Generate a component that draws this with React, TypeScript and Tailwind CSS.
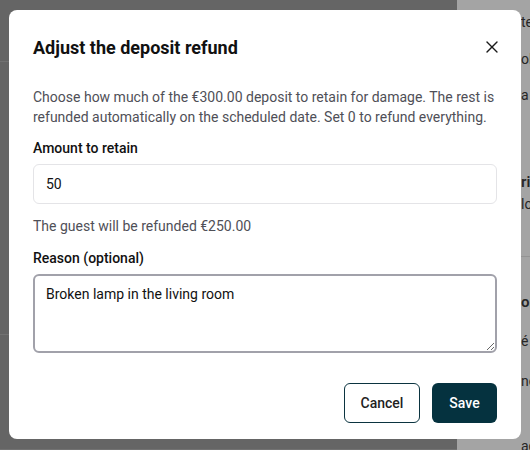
import { X } from 'lucide-react'

const LEFT_ROWS = [
  { h: 'h-[62px]', text: '' },
  { h: 'h-[273px]', text: 'Suite C' },
  { h: 'flex-1', text: '' },
]

export default function App() {
  return (
    <div className="relative w-[530px] h-[450px] overflow-hidden font-['Roboto',sans-serif]">
      {/* page behind the dimmed overlay */}
      <div className="flex h-full">
        <div className="w-[457px] bg-[#656565] flex flex-col">
          {LEFT_ROWS.map((row, i) => (
            <div key={i} className={`${row.h} border-b border-[#727272] text-[14px] text-[#2a2a2a]`} />
          ))}
        </div>
        <div className="flex-1 bg-[#a4a4a4] text-[14px] text-[#262626] pl-[64px] overflow-hidden whitespace-nowrap">
          <div className="pt-[12px] leading-[20px]">te</div>
          <div className="mt-[17px] leading-[20px]">ol</div>
          <div className="mt-[16px] leading-[20px]">a</div>
          <div className="mt-[67px] leading-[20px] font-semibold text-[15px]">ric</div>
          <div className="mt-[2px] leading-[20px]">lo</div>
          <div className="mt-[42px] border-t border-[#939393]" />
          <div className="mt-[35px] leading-[20px] font-semibold text-[15px]">or</div>
          <div className="mt-[19px] leading-[20px]">é</div>
          <div className="mt-[20px] leading-[20px]">ne</div>
          <div className="mt-[45px] leading-[20px]">adolfo</div>
        </div>
      </div>

      {/* modal */}
      <div className="absolute left-[9px] top-[10px] w-[512px] h-[429px] bg-white rounded-lg px-6 pt-6 pb-4 flex flex-col">
        <div className="flex items-start justify-between">
          <h2 className="text-[18px] leading-[28px] font-bold text-[#111111]">Adjust the deposit refund</h2>
          <button className="mt-[1px] -mr-[7px] p-[2px] text-[#1a1a1a]">
            <X size={20} strokeWidth={1.6} />
          </button>
        </div>

        <p className="mt-[25px] text-[14px] leading-[20px] text-[#4f4f57]">
          Choose how much of the €300.00 deposit to retain for damage. The rest is refunded automatically on the scheduled date. Set 0 to refund everything.
        </p>

        <label className="mt-[11px] text-[14px] leading-[20px] font-medium text-[#111111]">Amount to retain</label>
        <input
          defaultValue="50"
          className="mt-[6px] h-[40px] w-full rounded-md border border-[#e4e4e7] px-3 text-[14px] text-[#111111] outline-none"
        />
        <p className="mt-[12px] text-[14px] leading-[20px] text-[#4f4f57]">The guest will be refunded €250.00</p>

        <label className="mt-[12px] text-[14px] leading-[20px] font-medium text-[#111111]">Reason (optional)</label>
        <textarea
          defaultValue="Broken lamp in the living room"
          className="mt-[6px] h-[79px] w-full rounded-md border-2 border-[#a1a1aa] px-[11px] py-[8px] text-[14px] leading-[20px] text-[#111111] outline-none"
        />

        <div className="mt-auto flex justify-end gap-3">
          <button className="h-[40px] w-[76px] rounded-md border border-[#0b3440] bg-white text-[14px] font-medium text-[#1f1f1f]">
            Cancel
          </button>
          <button className="h-[40px] w-[65px] rounded-md bg-[#05323f] text-[14px] font-medium text-white">
            Save
          </button>
        </div>
      </div>
    </div>
  )
}
